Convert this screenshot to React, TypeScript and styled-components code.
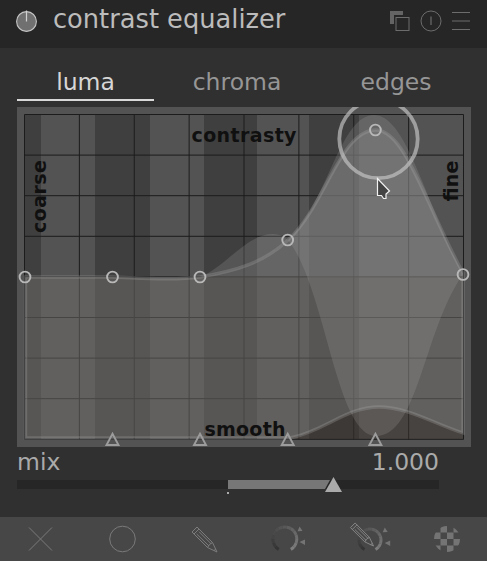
import React from "react";
import styled, { createGlobalStyle } from "styled-components";

const GlobalStyle = createGlobalStyle`
  body { margin: 0; background: #303030; }
  * { box-sizing: border-box; }
`;

const Panel = styled.main`
  width: 487px;
  height: 561px;
  display: flex;
  flex-direction: column;
  overflow: hidden;
  background: #303030;
  font-family: "DejaVu Sans", sans-serif;
  cursor: default;
`;

const Header = styled.header`
  height: 48px;
  flex: none;
  display: flex;
  align-items: center;
  padding: 0 15px 7px 15px;
  background: #262626;
`;

const Title = styled.h1`
  flex: 1;
  margin: 0 0 4px 14px;
  font-size: 25.7px;
  line-height: 32px;
  font-weight: 400;
  color: #bcbcbc;
  white-space: nowrap;
`;

const HeaderIcons = styled.div`
  display: flex;
  align-items: center;
  gap: 8.5px;
`;

const Icon = styled.svg`
  display: block;
  flex: none;
  overflow: visible;
`;

const Tabs = styled.nav`
  display: flex;
  height: 53px;
  flex: none;
  padding: 0 17px 0 17px;
`;

const Tab = styled.div<{ $width: number; $active?: boolean }>`
  width: ${(p) => p.$width}px;
  flex: none;
  padding-top: 20px;
  text-align: center;
  font-size: 23.5px;
  line-height: 28px;
  color: ${(p) => (p.$active ? "#d6d6d6" : "#969696")};
  border-bottom: 2px solid ${(p) => (p.$active ? "#d8d8d8" : "transparent")};
`;

const Graph = styled.svg`
  display: block;
  flex: none;
  width: 454px;
  height: 340px;
  margin: 6px 0 0 17px;
  background: #535353;
`;

const Mix = styled.section`
  flex: none;
  height: 70px;
  width: 422px;
  margin-left: 17px;
`;

const MixLabels = styled.div`
  display: flex;
  justify-content: space-between;
  height: 30px;
  padding-top: 1px;
  font-size: 23.5px;
  line-height: 28px;
  color: #aaa;
`;

const Toolbar = styled.footer`
  flex: 1;
  display: grid;
  grid-template-columns: repeat(6, 81.2px);
  align-items: center;
  justify-items: center;
  background: #474747;
`;

const gridX = Array.from({ length: 9 }, (_, i) => 24.5 + i * 54.875);
const gridY = Array.from({ length: 9 }, (_, i) => 114.5 + i * 40.6);
const darkBands = [[25, 16], [95, 55], [204, 53], [309, 50]];
const nodes = [[25, 277], [112.5, 277], [200, 277], [287.7, 240], [375.4, 130], [463, 274.5]];
const thresholds = [112.5, 200, 287.7, 375.4];

const region =
  "M25.5 277 L112 277 C140 278 172 281 200 277 C235 271 264 263 288 240 C326 205 340 130 376 130 C405 130 426 205 463 273 L463 433 C435 424 407 407 379 407 C346 407 325 431 290 438 L25.5 438 Z";
const influence =
  "M200 277 C226 267 246 234 273 234 C279 234 284 236 288 240 C328 202 340 115 374 115 C407 115 426 205 463 274 C423 332 418 436 376 436 C336 436 326 288 288 240 C264 263 235 271 200 277 Z";
const noise = "M290 438 C325 431 346 407 379 407 C407 407 435 424 463 433 L463 439 L290 439 Z";

function EqualizerGraph() {
  return (
    <Graph viewBox="17 107 454 340">
      {darkBands.map(([x, w]) => (
        <rect key={x} x={x} y={115} width={w} height={324} fill="#3f3f3f" />
      ))}
      <g stroke="#1c1c1c" strokeWidth={1} fill="none">
        {gridX.map((x) => <path key={x} d={`M${x} 114.5V439.5`} />)}
        {gridY.map((y) => <path key={y} d={`M24.5 ${y}H463.5`} />)}
      </g>
      <path d={noise} fill="#3b332e" fillOpacity={0.5} />
      <path d={region} fill="#787878" fillOpacity={0.5} clipPath="url(#upper)" />
      <path d={region} fill="#716d69" fillOpacity={0.5} clipPath="url(#lower)" />
      <clipPath id="upper"><rect x={17} y={107} width={454} height={169} /></clipPath>
      <clipPath id="lower"><rect x={17} y={276} width={454} height={171} /></clipPath>
      <path d={region} fill="none" stroke="#b0b0b0" strokeOpacity={0.26} strokeWidth={3.4} />
      <path d={influence} fill="#b0b0b0" fillOpacity={0.2} />
      <g fill="#101010" fontFamily='"DejaVu Sans", sans-serif' fontWeight={700} fontSize={19}>
        <text x={244} y={142} textAnchor="middle" textLength={105}>contrasty</text>
        <text x={245} y={436} textAnchor="middle" textLength={81}>smooth</text>
        <text transform="translate(46 196.5) rotate(-90)" textAnchor="middle" textLength={73}>coarse</text>
        <text transform="translate(458 181) rotate(-90)" textAnchor="middle" textLength={41}>fine</text>
      </g>
      <g fill="none" stroke="#b8b8b8" strokeWidth={1.9}>
        {nodes.map(([x, y]) => <circle key={x} cx={x} cy={y} r={5.4} />)}
      </g>
      <g fill="none" stroke="#9c9c9c" strokeWidth={1.9}>
        {thresholds.map((x) => <path key={x} d={`M${x} 433.8L${x + 6} 445H${x - 6}Z`} />)}
      </g>
      <circle cx={378.5} cy={139} r={39.2} fill="none" stroke="#c8c8c8" strokeOpacity={0.65} strokeWidth={3.8} />
      <path d="M377.5 178.5V195.5H381.5L383.5 198.5H386V194L389.5 191Z" fill="#444" stroke="#f2f2f2" strokeWidth={1.2} />
    </Graph>
  );
}

function MixSlider() {
  return (
    <Mix>
      <MixLabels><span>mix</span><span>1.000</span></MixLabels>
      <Icon width={422} height={20} viewBox="17 477 422 20">
        <rect x={17} y={480} width={422} height={9} fill="#262626" />
        <path d="M228 480H330L325 489H228Z" fill="#777" />
        <path d="M333.5 477L342 492H325Z" fill="#aaa" />
        <rect x={227} y={492} width={2} height={2} fill="#aaa" />
      </Icon>
    </Mix>
  );
}

const pencil = "M0 5L5 0L20.5 15.5L25 25L15.5 20.5ZM15.5 20.5L17.5 17.5L20.5 15.5M2 7L7 2M4.7 7L17 19M7 4.7L19 16.7M22 23.5L24 22";

function arcPoint(deg: number, r: number) {
  const a = (deg * Math.PI) / 180;
  return `${(r * Math.cos(a)).toFixed(2)} ${(r * Math.sin(a)).toFixed(2)}`;
}

function Dial({ r }: { r: number }) {
  return (
    <g fill="none" strokeWidth={3}>
      {Array.from({ length: 15 }, (_, i) => {
        const s = 120 + i * 20;
        const v = Math.round(52 + i * 5.2);
        return <path key={i} d={`M${arcPoint(s, r)}A${r} ${r} 0 0 1 ${arcPoint(s + 20, r)}`} stroke={`rgb(${v},${v},${v})`} />;
      })}
      <path d="M12.7 -7.7L14.8 -12.5L17.7 -8ZM14.7 3L20.2 0.5V6Z" fill="#747474" />
    </g>
  );
}

export default function App() {
  return (
    <Panel>
      <GlobalStyle />
      <Header>
        <Icon width={24} height={24} viewBox="0 0 24 24">
          <circle cx={11.5} cy={12.5} r={9.9} fill="#707070" stroke="#c4c4c4" strokeWidth={1.1} />
          <path d="M11.5 1.5V12.5" stroke="#d0d0d0" strokeWidth={1.2} />
        </Icon>
        <Title>contrast equalizer</Title>
        <HeaderIcons>
          <Icon width={22} height={22} viewBox="0 0 22 22" stroke="#6c6c6c" fill="none">
            <path d="M1 1H14V5H5V14H1Z" fill="#646464" stroke="none" />
            <rect x={7} y={7.5} width={13} height={13} fill="#262626" />
          </Icon>
          <Icon width={22} height={22} viewBox="0 0 22 22" stroke="#6c6c6c" fill="none">
            <circle cx={11} cy={11} r={10} />
            <path d="M11 6.5V15" strokeWidth={1.2} />
          </Icon>
          <Icon width={22} height={22} viewBox="0 0 22 22" stroke="#6c6c6c">
            <path d="M2 2.5H20M2 11H20M2 19.5H20" strokeWidth={1.2} />
          </Icon>
        </HeaderIcons>
      </Header>
      <Tabs>
        <Tab $width={137} $active>luma</Tab>
        <Tab $width={166}>chroma</Tab>
        <Tab $width={152}>edges</Tab>
      </Tabs>
      <EqualizerGraph />
      <MixSlider />
      <Toolbar>
        <Icon width={40} height={40} viewBox="-20 -20 40 40" stroke="#7a7a7a">
          <path d="M-12 -11.5L11 11.5M11 -11.5L-12 11.5" />
        </Icon>
        <Icon width={40} height={40} viewBox="-20 -20 40 40" stroke="#7a7a7a" fill="none">
          <circle r={12.8} cx={0.5} />
        </Icon>
        <Icon width={40} height={40} viewBox="-20 -20 40 40" stroke="#7c7c7c" fill="none">
          <path d={pencil} transform="translate(-11 -12)" />
        </Icon>
        <Icon width={40} height={40} viewBox="-20 -20 40 40">
          <g transform="translate(.8 0)"><Dial r={12} /></g>
        </Icon>
        <Icon width={40} height={40} viewBox="-20 -20 40 40">
          <g transform="translate(5 1)"><Dial r={11} /></g>
          <path d={pencil} transform="translate(-14.5 -16) scale(.92)" fill="#474747" stroke="#8a8a8a" />
        </Icon>
        <Icon width={40} height={40} viewBox="-20 -20 40 40">
          <clipPath id="disc"><circle r={13} /></clipPath>
          <g fill="#747474" clipPath="url(#disc)">
            {[0, 1, 2, 3].flatMap((row) =>
              [0, 1, 2, 3]
                .filter((col) => (row + col) % 2 === 1)
                .map((col) => <rect key={`${row}-${col}`} x={col * 6.5 - 13} y={row * 6.5 - 13} width={6.5} height={6.5} />)
            )}
          </g>
        </Icon>
      </Toolbar>
    </Panel>
  );
}
